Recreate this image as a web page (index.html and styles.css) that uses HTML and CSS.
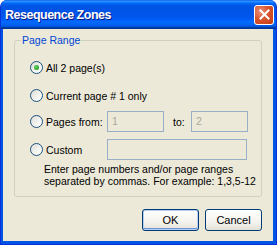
FILE: index.html
```html
<!DOCTYPE html>
<html>
<head>
<meta charset="utf-8">
<link rel="stylesheet" href="styles.css">
</head>
<body>
<div class="window">
  <div class="titlebar">
    <span class="title">Resequence Zones</span>
    <span class="close">
      <svg width="11" height="11" viewBox="0 0 11 11"><path d="M1.5 1.5 L9.5 9.5 M9.5 1.5 L1.5 9.5" stroke="#fff" stroke-width="2" stroke-linecap="square"/></svg>
    </span>
  </div>
  <div class="client">
    <fieldset class="group">
      <legend>Page Range</legend>
      <div class="rows">
        <div class="row r1"><span class="radio checked"></span><span class="lbl">All 2 page(s)</span></div>
        <div class="row r2"><span class="radio"></span><span class="lbl">Current page # 1 only</span></div>
        <div class="row r3"><span class="radio"></span><span class="lbl fixed">Pages from:</span><span class="edit small">1</span><span class="to">to:</span><span class="edit small">2</span></div>
        <div class="row r4"><span class="radio"></span><span class="lbl fixed">Custom</span><span class="edit wide"></span></div>
        <p class="help">Enter page numbers and/or page ranges<br>separated by commas. For example: 1,3,5-12</p>
      </div>
    </fieldset>
    <div class="buttons">
      <span class="btn default">OK</span>
      <span class="btn">Cancel</span>
    </div>
  </div>
</div>
</body>
</html>
```

FILE: styles.css
```css
html, body {
  margin: 0;
  padding: 0;
  background: #ffffff;
}
.window {
  width: 277px;
  height: 245px;
  box-sizing: border-box;
  display: flex;
  flex-direction: column;
  background: #0054E3;
  border: 1px solid #0831D9;
  border-top: none;
  border-radius: 7px 7px 0 0;
  overflow: hidden;
  font-family: "Liberation Sans", Arial, sans-serif;
  font-size: 10.5px;
  color: #000;
}
.titlebar {
  height: 29px;
  flex: none;
  display: flex;
  align-items: center;
  justify-content: space-between;
  padding: 0 3px 0 5px;
  margin: 0 -1px;
  background: linear-gradient(to bottom, #0058EE 0%, #3593FF 4%, #288EFF 6%, #127DFF 8%, #036FFC 10%, #0262EE 14%, #0057E5 20%, #0054E3 24%, #0055EB 56%, #005BF5 66%, #026AFE 76%, #0062EF 86%, #0052D6 92%, #0040AB 94%, #003092 100%);
}
.title {
  color: #fff;
  font-weight: bold;
  font-size: 12.5px;
  letter-spacing: -0.5px;
  text-shadow: 1px 1px 0 #0A1883;
  margin-top: 1px;
}
.close {
  width: 20px;
  height: 20px;
  box-sizing: border-box;
  border: 1px solid #fff;
  border-radius: 3px;
  background: radial-gradient(circle at 30% 30%, #E8917A 0%, #D8552F 45%, #C23A12 100%);
  display: flex;
  align-items: center;
  justify-content: center;
  margin-top: 0;
}
.client {
  flex: 1;
  background: #ECE9D8;
  margin: 0 3px 3px 2px;
  padding: 5px 11px 0 11px;
  display: flex;
  flex-direction: column;
}
.group {
  margin: 0;
  padding: 0 0 9px 6px;
  border: 1px solid #D0D0BF;
  border-radius: 3px;
  min-width: 0;
}
.group legend {
  color: #0046D5;
  padding: 0 1px;
  line-height: 12px;
}
.rows {
  padding-left: 9px;
  display: flex;
  flex-direction: column;
}
.row {
  display: flex;
  align-items: center;
  height: 21px;
}
.r1 { margin-top: 11px; }
.r2 { margin-top: 7px; }
.r3 { margin-top: 5px; }
.r4 { margin-top: 7px; }
.radio {
  width: 13px;
  height: 13px;
  box-sizing: border-box;
  border: 1px solid #1C5180;
  border-radius: 50%;
  background: linear-gradient(135deg, #DCDCD7 0%, #F4F4F0 60%, #FFFFFF 100%);
  margin-right: 3px;
  display: flex;
  align-items: center;
  justify-content: center;
  flex: none;
}
.radio.checked::after {
  content: "";
  width: 5px;
  height: 5px;
  border-radius: 50%;
  background: radial-gradient(circle at 40% 40%, #6BD56B 0%, #21A121 70%);
}
.lbl { white-space: nowrap; }
.lbl.fixed { width: 61px; }
.edit {
  box-sizing: border-box;
  height: 21px;
  border: 1px solid #98AFC8;
  color: #ACA899;
  padding: 2px 4px;
  line-height: 15px;
}
.edit.small { width: 57px; }
.edit.wide { width: 140px; }
.to {
  width: 27px;
  box-sizing: border-box;
  padding-left: 9px;
}
.help {
  margin: 3px 0 0 0;
  padding-left: 14px;
  line-height: 12px;
  white-space: nowrap;
}
.buttons {
  display: flex;
  justify-content: flex-end;
  gap: 6px;
  margin-top: 12px;
}
.btn {
  width: 57px;
  height: 22px;
  box-sizing: border-box;
  border: 1px solid #003C74;
  border-radius: 3px;
  background: linear-gradient(to bottom, #FFFFFF 0%, #F4F3EE 60%, #E3E1D6 100%);
  display: flex;
  align-items: center;
  justify-content: center;
  font-size: 11px;
}
.btn.default {
  box-shadow: inset 0 0 0 1px #B8CDF2, inset 0 -1px 0 1px #6B93D9;
}
```
